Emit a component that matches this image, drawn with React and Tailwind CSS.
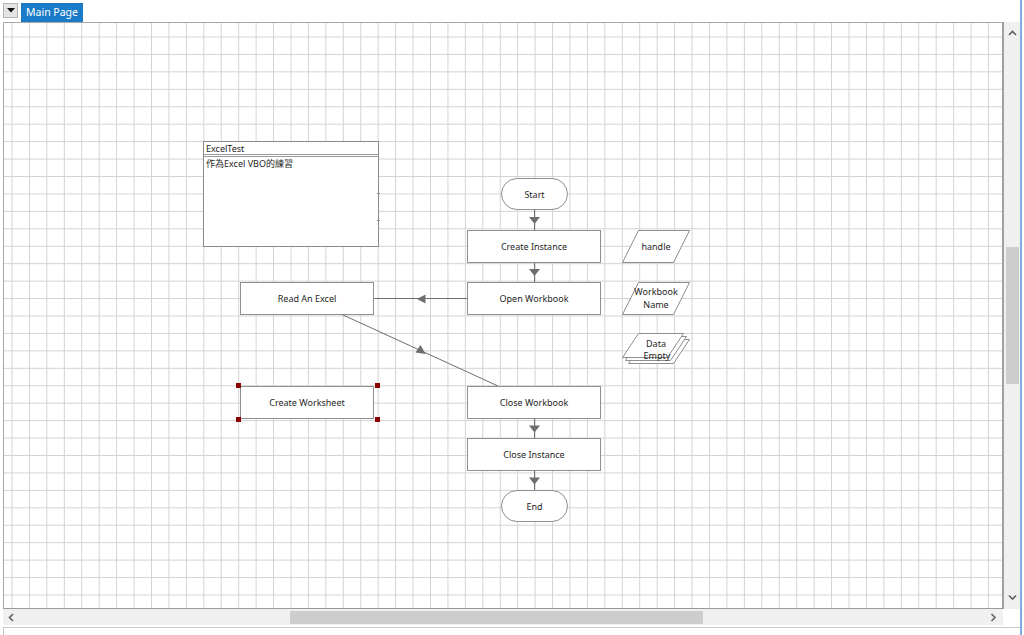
import React from "react";

const FONT = "font-['Segoe_UI','Noto_Sans','Noto_Sans_CJK_TC',sans-serif]";

function Box({ pos, children }) {
  return (
    <div
      className={`absolute ${pos} w-[134px] h-[33px] bg-white border border-[#8f8f8f] flex items-center justify-center text-[9px] text-[#1e1e1e] leading-none`}
    >
      {children}
    </div>
  );
}

function Pill({ pos, children }) {
  return (
    <div
      className={`absolute ${pos} w-[67px] h-[32px] bg-white border border-[#8f8f8f] rounded-full flex items-center justify-center text-[9px] text-[#1e1e1e] leading-none`}
    >
      {children}
    </div>
  );
}

function Chevron({ dir }) {
  const pts = {
    up: "1,5 4.5,1.5 8,5",
    down: "1,1.5 4.5,5 8,1.5",
    left: "5,1 1.5,4.5 5,8",
    right: "1.5,1 5,4.5 1.5,8",
  }[dir];
  const vb = dir === "up" || dir === "down" ? "0 0 9 7" : "0 0 7 9";
  const cls = dir === "up" || dir === "down" ? "w-[9px] h-[7px]" : "w-[7px] h-[9px]";
  return (
    <svg viewBox={vb} className={cls}>
      <polyline points={pts} fill="none" stroke="#606060" strokeWidth="1.6" />
    </svg>
  );
}

export default function App() {
  const line = "#6e6e6e";
  return (
    <div className={`relative w-[1024px] h-[635px] bg-white overflow-hidden flex flex-col ${FONT}`}>
      {/* top bar */}
      <div className="h-[22px] flex items-start pl-[3px] pt-[3px] gap-[3px] shrink-0">
        <div className="w-[15px] h-[15px] bg-[#e4e4e4] border border-[#b4b4b4] flex items-center justify-center">
          <svg viewBox="0 0 8 5" className="w-[8px] h-[5px]">
            <polygon points="0,0 8,0 4,4.5" fill="#111" />
          </svg>
        </div>
        <div className="w-[62px] h-[19px] bg-[#1a7bc9] text-white text-[10.5px] flex items-center justify-center leading-none">
          Main Page
        </div>
      </div>

      {/* middle row */}
      <div className="flex h-[587px] pl-[3px] shrink-0">
        <div className="relative w-[1001px] h-[587px] border-l border-t border-b border-r-2 border-l-[#a8a8a8] border-t-[#a8a8a8] border-b-[#9a9a9a] border-r-[#a0a0a0] bg-white [background-image:linear-gradient(to_right,#d2d2d2_1px,transparent_1px),linear-gradient(to_bottom,#d2d2d2_1px,transparent_1px)] [background-size:17.44px_17.44px] [background-position:7.5px_13.5px] overflow-hidden">
          {/* connectors & data shapes (page coordinates) */}
          <svg className="absolute left-0 top-0 w-[998px] h-[585px]" viewBox="4 23 998 585">
            <g stroke={line} strokeWidth="1" fill="none">
              <line x1="534.5" y1="210" x2="534.5" y2="230" />
              <line x1="534.5" y1="263" x2="534.5" y2="282" />
              <line x1="374" y1="298.5" x2="467" y2="298.5" />
              <line x1="342" y1="314.5" x2="498" y2="386" />
              <line x1="534.5" y1="419" x2="534.5" y2="438" />
              <line x1="534.5" y1="471" x2="534.5" y2="490" />
            </g>
            <g fill={line}>
              <polygon points="529,217 540,217 534.5,224" />
              <polygon points="529,269 540,269 534.5,276" />
              <polygon points="417,299 425.5,294.5 425.5,303.5" />
              <polygon points="420.5,345 415.5,352.5 425.5,354" />
              <polygon points="529,425.5 540,425.5 534.5,432.5" />
              <polygon points="529,477.5 540,477.5 534.5,484.5" />
            </g>
            <g stroke="#8f8f8f" strokeWidth="1" fill="white">
              <polygon points="638.5,230.5 689.5,230.5 673.5,262.5 622.5,262.5" />
              <polygon points="638.5,282.5 689.5,282.5 673.5,314.5 622.5,314.5" />
              <polygon points="644.5,339.5 689.5,339.5 673.5,363.5 628.5,363.5" />
              <polygon points="641.5,336.5 686.5,336.5 670.5,360.5 625.5,360.5" />
              <polygon points="638.5,333.5 683.5,333.5 667.5,357.5 622.5,357.5" />
            </g>
            <g fontSize="9" fill="#1e1e1e" textAnchor="middle" fontFamily="'Segoe UI','Noto Sans',sans-serif">
              <text x="656" y="249.5">handle</text>
              <text x="656" y="295">Workbook</text>
              <text x="656" y="308">Name</text>
              <text x="656" y="347">Data</text>
              <text x="657" y="359">Empty</text>
            </g>
          </svg>

          {/* note */}
          <div className="absolute left-[199px] top-[118px] w-[176px] h-[106px] bg-white border border-[#8a8a8a] flex flex-col text-[9px] text-[#1e1e1e] leading-none">
            <div className="h-[15px] border-b-[3px] border-double border-[#9a9a9a] pl-[2px] flex items-center">
              ExcelTest
            </div>
            <div className="pl-[2px] pt-[2px] font-['Segoe_UI','Noto_Sans','Noto_Sans_CJK_TC',sans-serif]">
              作為Excel VBO的練習
            </div>
            <span className="absolute right-[-2px] top-[51px] w-[3px] h-px bg-[#8a8a8a]" />
            <span className="absolute right-[-2px] top-[78px] w-[3px] h-px bg-[#8a8a8a]" />
          </div>

          <Pill pos="left-[497px] top-[155px]">Start</Pill>
          <Box pos="left-[463px] top-[207px]">Create Instance</Box>
          <Box pos="left-[463px] top-[259px]">Open Workbook</Box>
          <Box pos="left-[236px] top-[259px]">Read An Excel</Box>
          <Box pos="left-[236px] top-[363px]">Create Worksheet</Box>
          <Box pos="left-[463px] top-[363px]">Close Workbook</Box>
          <Box pos="left-[463px] top-[415px]">Close Instance</Box>
          <Pill pos="left-[497px] top-[467px]">End</Pill>

          {/* selection handles */}
          <span className="absolute left-[232px] top-[360px] w-[5px] h-[5px] bg-[#8b0000]" />
          <span className="absolute left-[371px] top-[360px] w-[5px] h-[5px] bg-[#8b0000]" />
          <span className="absolute left-[232px] top-[394px] w-[5px] h-[5px] bg-[#8b0000]" />
          <span className="absolute left-[371px] top-[394px] w-[5px] h-[5px] bg-[#8b0000]" />
        </div>

        {/* vertical scrollbar */}
        <div className="w-[16px] h-[587px] bg-[#f0f0f0] flex flex-col items-center">
          <div className="h-[20px] w-full flex items-center justify-center pt-[2px]">
            <Chevron dir="up" />
          </div>
          <div className="mt-[205px] w-[13px] h-[137px] bg-[#cdcdcd]" />
          <div className="flex-1" />
          <div className="h-[20px] w-full flex items-center justify-center pb-[3px]">
            <Chevron dir="down" />
          </div>
        </div>
      </div>

      {/* horizontal scrollbar */}
      <div className="ml-[3px] w-[1000px] h-[16px] bg-[#f0f0f0] flex items-center shrink-0">
        <div className="w-[17px] flex justify-center">
          <Chevron dir="left" />
        </div>
        <div className="ml-[270px] w-[413px] h-[13px] bg-[#cdcdcd]" />
        <div className="flex-1" />
        <div className="w-[20px] flex justify-center">
          <Chevron dir="right" />
        </div>
      </div>

      {/* bottom panel */}
      <div className="mt-[2px] ml-[3px] mr-[4px] flex-1 border-t border-l border-[#c8c8c8] bg-white" />

      {/* window edge */}
      <div className="absolute top-0 bottom-0 left-[1020px] w-[2px] bg-[#7fb0dd]" />
    </div>
  );
}
